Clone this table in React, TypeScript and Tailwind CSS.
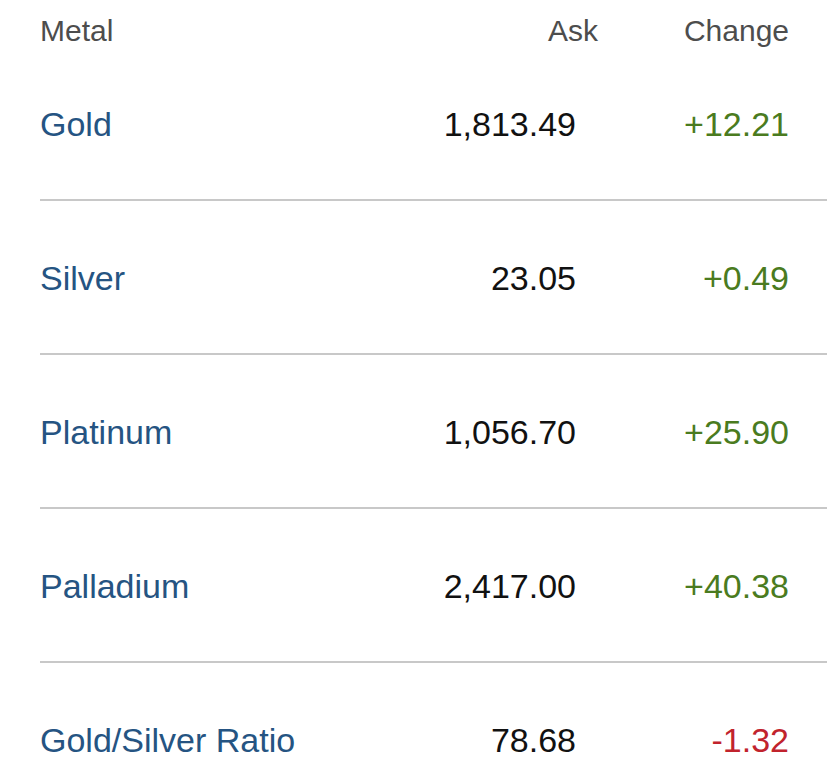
import React from "react";

interface MetalRow {
  name: string;
  ask: string;
  change: string;
}

const rows: MetalRow[] = [
  { name: "Gold", ask: "1,813.49", change: "+12.21" },
  { name: "Silver", ask: "23.05", change: "+0.49" },
  { name: "Platinum", ask: "1,056.70", change: "+25.90" },
  { name: "Palladium", ask: "2,417.00", change: "+40.38" },
  { name: "Gold/Silver Ratio", ask: "78.68", change: "-1.32" },
];

const App: React.FC = () => {
  return (
    <div
      className="w-[827px] h-[781px] overflow-hidden bg-white pl-[40px]"
      style={{ fontFamily: '"Liberation Sans", Arial, sans-serif' }}
    >
      <div className="flex h-[47px] pt-[16px] pr-[38px] text-[30px] leading-[30px] text-[#4d4d4d]">
        <div className="flex-1">Metal</div>
        <div className="w-[200px] text-right">Ask</div>
        <div className="w-[191px] text-right">Change</div>
      </div>
      {rows.map((row) => (
        <div
          key={row.name}
          className="flex items-center h-[154px] pt-[2px] pr-[38px] border-b-2 border-[#c8c8c8] text-[34px] leading-[34px]"
        >
          <div className="flex-1 text-[#255482]">{row.name}</div>
          <div className="w-[200px] text-right pr-[22px] text-[#111111]">
            {row.ask}
          </div>
          <div
            className={
              row.change.startsWith("-")
                ? "w-[191px] text-right text-[#c1232d]"
                : "w-[191px] text-right text-[#4a7b20]"
            }
          >
            {row.change}
          </div>
        </div>
      ))}
    </div>
  );
};

export default App;
